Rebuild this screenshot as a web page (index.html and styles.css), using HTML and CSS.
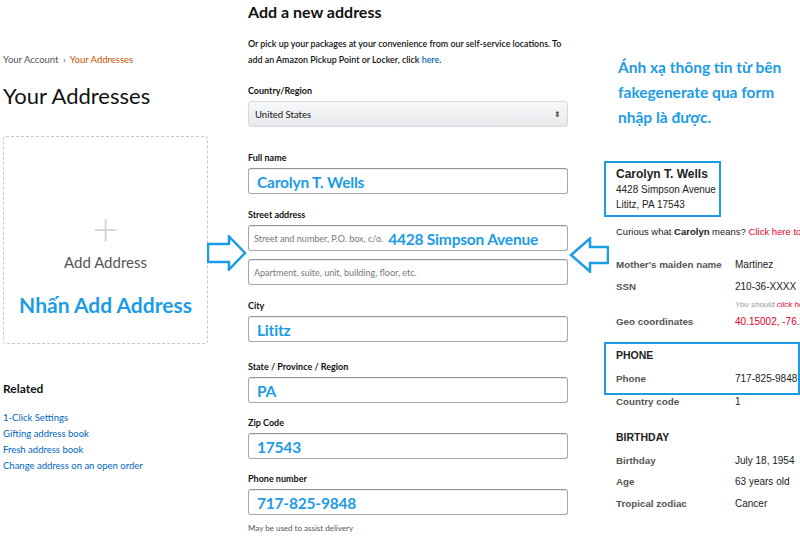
FILE: index.html
```html
<!doctype html>
<html lang="en">
<head>
    <meta charset="UTF-8"/>
    <title>Your Addresses</title>
    <link rel="stylesheet" href="styles.css">
</head>
<body>
<div class="page">
    <div class="side">
        <div class="crumbs">
            <a href="#" class="crumb">Your Account</a>
            <span class="sep">›</span>
            <a href="#" class="crumb current">Your Addresses</a>
        </div>
        <h1 class="page-title">Your Addresses</h1>

        <div class="add-box">
            <div class="plus">+</div>
            <div class="add-label">Add Address</div>
            <div class="note note-add">Nhấn Add Address</div>
        </div>

        <div class="related">
            <h3>Related</h3>
            <a href="#">1-Click Settings</a>
            <a href="#">Gifting address book</a>
            <a href="#">Fresh address book</a>
            <a href="#">Change address on an open order</a>
        </div>
    </div>

    <div class="form">
        <h2>Add a new address</h2>
        <p class="intro">Or pick up your packages at your convenience from our self-service locations. To<br>
            add an Amazon Pickup Point or Locker, click <a href="#">here</a>.</p>

        <div class="field country">
            <label>Country/Region</label>
            <div class="select">
                <span>United States</span>
                <span class="caret">⬍</span>
            </div>
        </div>

        <div class="field first">
            <label>Full name</label>
            <div class="input"><span class="fill">Carolyn T. Wells</span></div>
        </div>

        <div class="field">
            <label>Street address</label>
            <div class="input">
                <span class="placeholder">Street and number, P.O. box, c/o.</span>
                <span class="fill street">4428 Simpson Avenue</span>
            </div>
            <div class="input second">
                <span class="placeholder">Apartment, suite, unit, building, floor, etc.</span>
            </div>
        </div>

        <div class="field">
            <label>City</label>
            <div class="input"><span class="fill">Lititz</span></div>
        </div>

        <div class="field state">
            <label>State / Province / Region</label>
            <div class="input"><span class="fill">PA</span></div>
        </div>

        <div class="field tight">
            <label>Zip Code</label>
            <div class="input"><span class="fill">17543</span></div>
        </div>

        <div class="field tight">
            <label>Phone number</label>
            <div class="input"><span class="fill">717-825-9848</span></div>
            <div class="hint">May be used to assist delivery</div>
        </div>
    </div>

    <div class="fake">
        <div class="note note-map">Ánh xạ thông tin từ bên<br>fakegenerate qua form<br>nhập là được.</div>

        <div class="address-card">
            <div class="person">Carolyn T. Wells</div>
            <div>4428 Simpson Avenue</div>
            <div>Lititz, PA 17543</div>
        </div>

        <p class="curious">Curious what <b>Carolyn</b> means? <a href="#">Click here to find out!</a></p>

        <div class="rows identity">
            <div class="row"><span class="key">Mother's maiden name</span><span>Martinez</span></div>
            <div class="row"><span class="key">SSN</span><span>210-36-XXXX</span></div>
            <div class="row small"><span class="key"></span><span class="warn">You should <em>click here</em> to verify</span></div>
            <div class="row"><span class="key">Geo coordinates</span><span class="red">40.15002, -76.28</span></div>
        </div>

        <div class="phone-box">
            <h4>PHONE</h4>
            <div class="row"><span class="key">Phone</span><span>717-825-9848</span></div>
        </div>
        <div class="rows">
            <div class="row short"><span class="key">Country code</span><span>1</span></div>
        </div>

        <h4 class="section">BIRTHDAY</h4>
        <div class="rows">
            <div class="row"><span class="key">Birthday</span><span>July 18, 1954</span></div>
            <div class="row"><span class="key">Age</span><span>63 years old</span></div>
            <div class="row"><span class="key">Tropical zodiac</span><span>Cancer</span></div>
        </div>
    </div>
</div>

<svg class="arrow arrow-right" width="40" height="36" viewBox="0 0 40 36">
    <path d="M1 9 H22 V1.5 L38 18 L22 34.5 V27 H1 Z" fill="none" stroke="#1c9ce5" stroke-width="2.5"/>
</svg>
<svg class="arrow arrow-left" width="40" height="36" viewBox="0 0 40 36">
    <path d="M39 10 H21 V1.5 L2 18 L21 34.5 V26 H39 Z" fill="none" stroke="#1c9ce5" stroke-width="2.5"/>
</svg>
</body>
</html>
```

FILE: styles.css
```css
body {
    margin: 0;
    width: 800px;
    height: 536px;
    overflow: hidden;
    position: relative;
    background: #fff;
    font-family: Lato, "Liberation Sans", sans-serif;
    color: #111;
}

a {
    color: #0066c0;
    text-decoration: none;
}

.page {
    display: flex;
}

/* left column */
.side {
    width: 205px;
    padding-left: 3px;
    flex-shrink: 0;
}

.crumbs {
    margin-top: 54px;
    font-size: 9.5px;
    color: #555;
}

.crumb {
    color: #555;
}

.crumb.current {
    color: #c45500;
}

.sep {
    margin: 0 2px;
}

.page-title {
    margin: 16px 0 0;
    font-size: 22px;
    font-weight: 400;
    line-height: 30px;
}

.add-box {
    margin-top: 25px;
    height: 206px;
    border: 1px dashed #c7c7c7;
    border-radius: 3px;
    display: flex;
    flex-direction: column;
    align-items: center;
}

.plus {
    margin-top: 71px;
    font-size: 46px;
    line-height: 40px;
    font-weight: 300;
    color: #d5d5d5;
}

.add-label {
    margin-top: 5px;
    font-size: 15px;
    line-height: 18px;
    color: #555;
}

.note {
    color: #1c9ce5;
    font-weight: 700;
}

.note-add {
    margin-top: 21px;
    font-size: 21px;
    line-height: 26px;
}

.related {
    margin-top: 37px;
}

.related h3 {
    margin: 0 0 14px;
    font-size: 12px;
    line-height: 15px;
}

.related a {
    display: block;
    font-size: 9.5px;
    line-height: 16px;
}

/* middle form */
.form {
    width: 320px;
    margin-left: 40px;
    flex-shrink: 0;
}

.form h2 {
    margin: 2px 0 0;
    font-size: 16px;
    line-height: 20px;
}

.intro {
    margin: 14px 0 0;
    font-size: 8.9px;
    line-height: 16px;
    font-weight: 600;
    white-space: nowrap;
}

.field {
    margin-top: 15px;
}

.field.country {
    margin-top: 17px;
}

.field.first {
    margin-top: 25px;
}

.field.state {
    margin-top: 19px;
}

.field.tight {
    margin-top: 14px;
}

label {
    display: block;
    font-size: 9px;
    font-weight: 700;
    line-height: 12px;
    margin-bottom: 4px;
}

.select {
    height: 24px;
    border: 1px solid #d5d9d9;
    border-radius: 3px;
    background: linear-gradient(#f7f8fa, #e7e9ec);
    display: flex;
    align-items: center;
    justify-content: space-between;
    padding: 0 6px;
    font-size: 9.5px;
}

.caret {
    font-size: 8px;
    color: #555;
}

.input {
    height: 24px;
    border: 1px solid #a6a6a6;
    border-top-color: #949494;
    border-radius: 3px;
    box-shadow: 0 1px 0 rgba(0, 0, 0, 0.07) inset;
    display: flex;
    align-items: center;
    padding: 0 8px;
    white-space: nowrap;
    overflow: hidden;
}

.input.second {
    margin-top: 8px;
}

.fill {
    color: #1c9ce5;
    font-weight: 700;
    font-size: 15.5px;
    letter-spacing: -0.2px;
    padding-top: 2px;
}

.placeholder {
    font-size: 9px;
    color: #777;
}

.input .placeholder + .street {
    margin-left: 5px;
}

.input:has(.placeholder) {
    padding-left: 5px;
}

.hint {
    margin-top: 8px;
    font-size: 8px;
    line-height: 10px;
    color: #555;
}

/* right fake identity column */
.fake {
    margin-left: 36px;
    flex-shrink: 0;
    width: 260px;
    font-family: "Liberation Sans", Arial, sans-serif;
    font-size: 10px;
    color: #222;
}

.note-map {
    margin: 55px 0 0 14px;
    font-family: Lato, "Liberation Sans", sans-serif;
    font-size: 15.5px;
    line-height: 25px;
}

.address-card {
    display: inline-block;
    margin-top: 31px;
    padding: 4px 3px 3px 10px;
    border: 2px solid #1c9ce5;
    line-height: 15px;
    white-space: nowrap;
}

.person {
    font-size: 12px;
    font-weight: 700;
}

.curious {
    margin: 9px 0 0 12px;
    font-size: 9.5px;
    line-height: 12px;
    white-space: nowrap;
}

.curious a {
    color: #e4002b;
}

.rows {
    padding-left: 12px;
}

.rows.identity {
    margin-top: 16px;
}

.row {
    display: flex;
    height: 21.5px;
    align-items: center;
    white-space: nowrap;
}

.key {
    width: 119px;
    flex-shrink: 0;
    color: #555;
    font-weight: 700;
    font-size: 9.8px;
}

.row.small {
    height: 14px;
    font-size: 8px;
}

.row.short {
    height: 14px;
}

.warn {
    color: #999;
    font-style: italic;
}

.warn em {
    color: #e4002b;
}

.red {
    color: #e4002b;
}

.phone-box {
    margin-top: 9px;
    width: 182px;
    padding: 1px 0 0 10px;
    border: 2px solid #1c9ce5;
}

.phone-box h4,
.section {
    margin: 0;
    font-size: 10.5px;
    line-height: 20px;
}

.phone-box .row {
    height: 28px;
}

.section {
    margin: 18px 0 3px 12px;
}

.arrow {
    position: absolute;
}

.arrow-right {
    left: 207px;
    top: 235px;
}

.arrow-left {
    left: 569px;
    top: 237px;
}
```
